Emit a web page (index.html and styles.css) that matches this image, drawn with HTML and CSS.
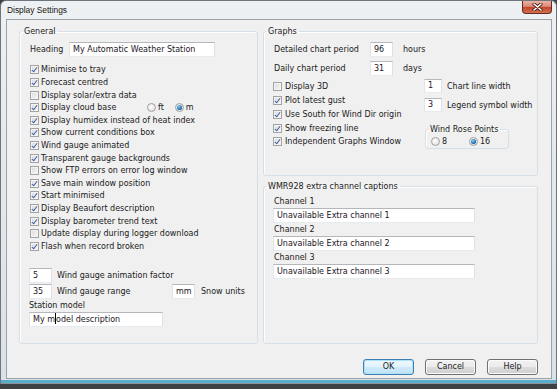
FILE: index.html
```html
<!DOCTYPE html>
<html lang="en">
<head>
  <meta charset="UTF-8" />
  <meta name="viewport" content="width=device-width, initial-scale=1.0"/>
  <title>Display Settings</title>
  <link rel="stylesheet" href="styles.css">
</head>
<body>

  <div class="window">
    <div class="titlebar">
      <span class="title">Display Settings</span>
      <span class="close-btn">
        <svg width="11" height="8" viewBox="0 0 11 8">
          <path d="M2 1 L9 7 M9 1 L2 7" stroke="#4a1b12" stroke-width="3.2" stroke-linecap="round"/>
          <path d="M2 1 L9 7 M9 1 L2 7" stroke="#ffffff" stroke-width="1.6" stroke-linecap="round"/>
        </svg>
      </span>
    </div>

    <div class="client">
      <div class="columns">

        <fieldset class="group group-general">
          <legend>General</legend>
          <div class="general-body">
            <div class="heading-row">
              <span class="heading-label">Heading</span>
              <span class="field field-heading">My Automatic Weather Station</span>
            </div>

            <div class="check-list">
              <div class="check"><span class="box on"></span>Minimise to tray</div>
              <div class="check"><span class="box on"></span>Forecast centred</div>
              <div class="check"><span class="box"></span>Display solar/extra data</div>
              <div class="check">
                <span class="box on"></span><span class="cloud-label">Display cloud base</span>
                <span class="radio"></span><span>ft</span>
                <span class="radio on radio-m"></span><span>m</span>
              </div>
              <div class="check"><span class="box on"></span>Display humidex instead of heat index</div>
              <div class="check"><span class="box on"></span>Show current conditions box</div>
              <div class="check"><span class="box on"></span>Wind gauge animated</div>
              <div class="check"><span class="box on"></span>Transparent gauge backgrounds</div>
              <div class="check"><span class="box"></span>Show FTP errors on error log window</div>
              <div class="check"><span class="box on"></span>Save main window position</div>
              <div class="check"><span class="box on"></span>Start minimised</div>
              <div class="check"><span class="box on"></span>Display Beaufort description</div>
              <div class="check"><span class="box on"></span>Display barometer trend text</div>
              <div class="check"><span class="box"></span>Update display during logger download</div>
              <div class="check"><span class="box on"></span>Flash when record broken</div>
            </div>

            <div class="bottom-fields">
              <div class="num-row">
                <span class="field field-small">5</span>
                <span class="num-label">Wind gauge animation factor</span>
              </div>
              <div class="num-row">
                <span class="field field-small">35</span>
                <span class="num-label range-label">Wind gauge range</span>
                <span class="field field-small">mm</span>
                <span class="snow-label">Snow units</span>
              </div>
              <div class="station-label">Station model</div>
              <div class="field field-station">My m<span class="caret"></span>odel description</div>
            </div>
          </div>
        </fieldset>

        <div class="graphs-col">
          <fieldset class="group group-graphs">
            <legend>Graphs</legend>
            <div class="graphs-body">
              <div class="chart-row">
                <span class="chart-label">Detailed chart period</span>
                <span class="field field-small">96</span>
                <span class="unit">hours</span>
              </div>
              <div class="chart-row">
                <span class="chart-label">Daily chart period</span>
                <span class="field field-small">31</span>
                <span class="unit">days</span>
              </div>

              <div class="graph-lower">
                <div class="graph-checks">
                  <div class="check"><span class="box"></span>Display 3D</div>
                  <div class="check"><span class="box on"></span>Plot latest gust</div>
                  <div class="check"><span class="box on"></span>Use South for Wind Dir origin</div>
                  <div class="check"><span class="box on"></span>Show freezing line</div>
                  <div class="check"><span class="box on"></span>Independent Graphs Window</div>
                </div>
                <div class="graph-side">
                  <div class="side-row">
                    <span class="field field-tiny">1</span>
                    <span class="side-label">Chart line width</span>
                  </div>
                  <div class="side-row">
                    <span class="field field-tiny">3</span>
                    <span class="side-label">Legend symbol width</span>
                  </div>
                  <fieldset class="group rose">
                    <legend>Wind Rose Points</legend>
                    <div class="rose-options">
                      <span class="rose-opt rose-first"><span class="radio"></span>8</span>
                      <span class="rose-opt"><span class="radio on"></span>16</span>
                    </div>
                  </fieldset>
                </div>
              </div>
            </div>
          </fieldset>

          <fieldset class="group group-wmr">
            <legend>WMR928 extra channel captions</legend>
            <div class="wmr-body">
              <div class="chan-label">Channel 1</div>
              <div class="field field-chan">Unavailable Extra channel 1</div>
              <div class="chan-label">Channel 2</div>
              <div class="field field-chan">Unavailable Extra channel 2</div>
              <div class="chan-label">Channel 3</div>
              <div class="field field-chan">Unavailable Extra channel 3</div>
            </div>
          </fieldset>
        </div>

      </div>

      <div class="buttons">
        <span class="btn btn-default">OK</span>
        <span class="btn">Cancel</span>
        <span class="btn">Help</span>
      </div>
    </div>
  </div>

</body>
</html>
```

FILE: styles.css
```css
* {
  margin: 0;
  padding: 0;
  box-sizing: border-box;
}

body {
  font-family: "DejaVu Sans", Verdana, sans-serif;
  font-size: 8px;
  color: #1a1a1a;
  background: #3e4143;
  height: 389px;
  overflow: hidden;
}

/* window frame */

.window {
  width: 557px;
  height: 384px;
  border: 1px solid #6f767b;
  border-bottom: none;
  border-radius: 6px 6px 0 0;
  padding: 0 4px 5px 5px;
  background: linear-gradient(to bottom, #eef1f3, #e4e9ed 40%, #dae1e7);
  box-shadow: inset 0 -1px 0 #8b9296, inset 0 -4px 0 #5aaccc;
}

.titlebar {
  height: 18px;
  display: flex;
  align-items: flex-start;
}

.title {
  padding-left: 1px;
  line-height: 18px;
  font-family: "Liberation Sans", Arial, sans-serif;
  font-size: 8.4px;
  color: #111;
  text-shadow: 0 0 4px #fff;
}

.close-btn {
  margin-left: auto;
  width: 30px;
  height: 13px;
  border: 1px solid #6b2a1f;
  border-top: none;
  border-radius: 0 0 4px 4px;
  background: linear-gradient(to bottom, #eab3a6, #dc8a76 45%, #c2452c 52%, #d0704f);
  display: flex;
  align-items: center;
  justify-content: center;
}

.client {
  height: 360px;
  border: 1px solid #9ca4ab;
  background: #f0f0f0;
  padding: 6px 13px 0 12px;
}

.columns {
  display: flex;
  gap: 5px;
  align-items: flex-start;
}

/* group boxes */

.group {
  border: 1px solid #d5dfe5;
  border-radius: 3px;
  padding: 0;
  margin: 0;
  min-width: 0;
  box-shadow: inset 1px 1px 0 #fff;
}

.group legend {
  margin-left: 2px;
  padding: 0 2px;
  line-height: 11px;
  font-size: 8px;
}

.group-general {
  width: 239px;
  height: 318px;
}

.graphs-col {
  width: 275px;
  display: flex;
  flex-direction: column;
}

.group-graphs {
  height: 150px;
}

.group-wmr {
  height: 163px;
  margin-top: 5px;
}

/* inputs */

.field {
  display: block;
  height: 15px;
  background: #fff;
  border: 1px solid;
  border-color: #b5b7bd #dde1e7 #e6ebf0 #e2e4ea;
  padding-left: 3px;
  line-height: 13px;
  white-space: nowrap;
  overflow: hidden;
  color: #1c1424;
  flex: none;
}

.caret {
  display: inline-block;
  width: 1px;
  height: 11px;
  background: #000;
  vertical-align: -2px;
}

.box {
  position: relative;
  width: 9px;
  height: 9px;
  margin: 0 2px 0 1px;
  border: 1px solid #a2a3a4;
  background: linear-gradient(135deg, #d9d9d9, #f9f9f9);
  box-shadow: inset 0 0 0 1px #f4f4f4;
  flex: none;
}

.box.on::after {
  content: "";
  position: absolute;
  left: 2px;
  top: 0;
  width: 2px;
  height: 5px;
  border: solid #3d5aa3;
  border-width: 0 1.5px 1.5px 0;
  transform: rotate(38deg);
}

.radio {
  position: relative;
  display: inline-block;
  width: 9px;
  height: 9px;
  margin-right: 2px;
  border: 1px solid #a0a0a0;
  border-radius: 50%;
  background: radial-gradient(circle at 40% 40%, #ffffff, #d8d8d8);
  flex: none;
}

.radio.on::after {
  content: "";
  position: absolute;
  left: 1px;
  top: 1px;
  width: 5px;
  height: 5px;
  border-radius: 50%;
  background: radial-gradient(circle at 40% 35%, #8fd6f7, #1f72b4 55%, #0e3b68);
}

/* general */

.general-body {
  padding: 5px 0 0 9px;
}

.heading-row {
  display: flex;
  align-items: center;
  height: 15px;
}

.heading-label {
  width: 40px;
  padding-left: 1px;
}

.field-heading {
  width: 146px;
}

.check-list {
  margin-top: 6.7px;
}

.check {
  display: flex;
  align-items: center;
  height: 12.6px;
  white-space: nowrap;
}

.cloud-label {
  width: 106px;
}

.radio-m {
  margin-left: 11px;
}

.bottom-fields {
  margin-top: 15.3px;
}

.num-row {
  display: flex;
  align-items: center;
  height: 15px;
}

.num-row + .num-row {
  margin-top: 1px;
}

.field-small {
  width: 23px;
}

.num-label {
  margin-left: 5px;
}

.range-label {
  width: 115px;
}

.snow-label {
  margin-left: 6px;
}

.station-label {
  margin-top: 1px;
  line-height: 11px;
}

.field-station {
  width: 134px;
  margin-top: 1px;
}

/* graphs */

.graphs-body {
  padding: 5px 0 0 10px;
}

.chart-row {
  display: flex;
  align-items: center;
  height: 15px;
}

.chart-row + .chart-row {
  margin-top: 4px;
}

.chart-label {
  width: 96px;
}

.unit {
  margin-left: 10px;
}

.graph-lower {
  display: flex;
  margin-top: 3px;
}

.graph-checks {
  width: 152px;
  margin-left: -2px;
  padding-top: 1.1px;
}

.graph-checks .check {
  height: 13.75px;
}

.graph-checks .box {
  margin-right: 3px;
}

.side-row {
  display: flex;
  align-items: center;
  height: 14px;
}

.side-row + .side-row {
  margin-top: 5px;
}

.field-tiny {
  width: 18px;
  height: 14px;
  line-height: 12px;
}

.side-label {
  margin-left: 5px;
  white-space: nowrap;
}

.rose {
  width: 84px;
  height: 25px;
  margin: 12px 0 0 1px;
}

.rose-options {
  display: flex;
  height: 12px;
  padding-left: 5px;
}

.rose-opt {
  display: flex;
  align-items: center;
}

.rose-first {
  width: 38px;
}

/* wmr captions */

.wmr-body {
  padding: 4px 0 0 9px;
}

.chan-label {
  line-height: 12px;
  padding-left: 1px;
}

.field + .chan-label {
  margin-top: 1px;
}

.field-chan {
  width: 202px;
}

/* buttons */

.buttons {
  display: flex;
  justify-content: flex-end;
  gap: 11px;
  margin-top: 15px;
}

.btn {
  width: 51px;
  height: 16px;
  border: 1px solid #707070;
  border-radius: 3px;
  background: linear-gradient(to bottom, #f2f2f2, #ebebeb 50%, #dddddd 50%, #cfcfcf);
  box-shadow: inset 0 0 0 1px #fbfbfb;
  text-align: center;
  line-height: 14px;
  color: #1e1e1e;
}

.btn-default {
  border-color: #3c7fb1;
  background: linear-gradient(to bottom, #eef7fd, #e1f2fc 50%, #cfeafa 50%, #bfe2f6);
  box-shadow: inset 0 0 0 1px #aee2fb;
}
```
